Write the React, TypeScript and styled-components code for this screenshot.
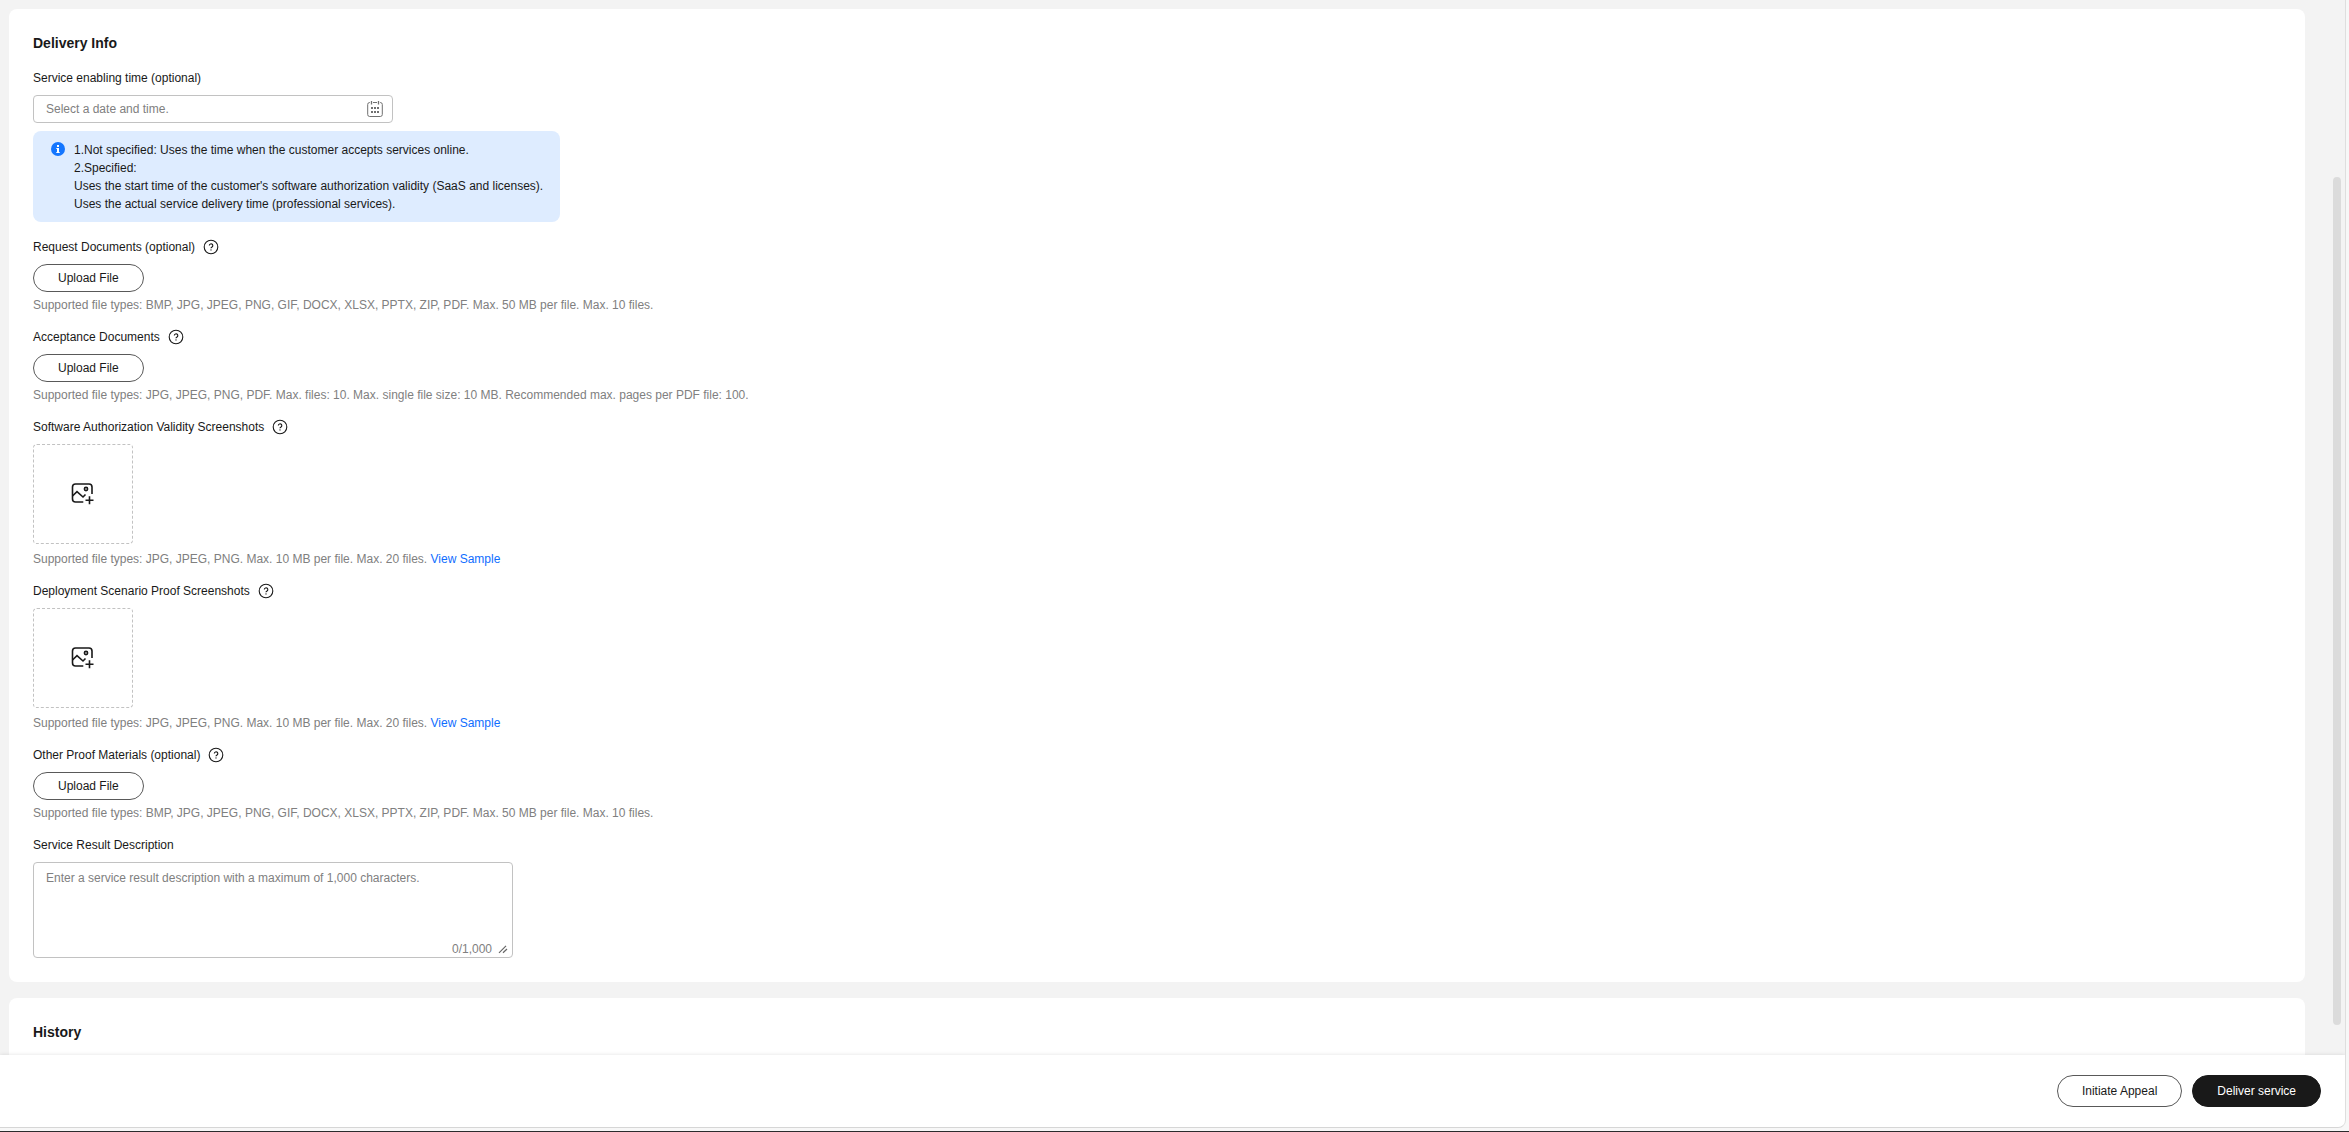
import React, { useState } from "react";
import styled, { createGlobalStyle } from "styled-components";

const GlobalStyle = createGlobalStyle`
  *, *::before, *::after { box-sizing: border-box; }
  body {
    margin: 0;
    background: #f7f7f7;
    color: #191919;
    font-family: "Liberation Sans", Arial, sans-serif;
    font-size: 12px;
    line-height: 18px;
  }
  button, input, textarea { font: inherit; color: inherit; }
`;

const Window = styled.div`
  display: flex;
  flex-direction: column;
  height: 100vh;
  padding: 0 3px 3px 0;
  border-bottom: 1px solid #2b2b2d;
`;

const Frame = styled.div`
  display: flex;
  flex-direction: column;
  flex: 1;
  min-height: 0;
  overflow: hidden;
  background: #f3f3f3;
  border-right: 1px solid #dedede;
  border-bottom: 1px solid #d6d6d6;
  border-bottom-right-radius: 8px;
`;

const Viewport = styled.div`
  display: flex;
  flex: 1;
  min-height: 0;
`;

const Content = styled.main`
  display: flex;
  flex-direction: column;
  gap: 16px;
  flex: 1;
  min-width: 0;
  overflow: hidden;
  padding: 9px 28px 0 9px;
`;

const ScrollRail = styled.div`
  display: flex;
  width: 12px;
  padding: 177px 4px 30px 0;
`;

const ScrollThumb = styled.div`
  flex: 1;
  border-radius: 4px;
  background: #dbdbdb;
`;

const Card = styled.section`
  flex: none;
  padding: 24px;
  border-radius: 8px;
  background: #fff;
`;

const CardTitle = styled.h2`
  margin: 0;
  font-size: 14px;
  line-height: 20px;
  font-weight: 700;
`;

const Form = styled.form`
  display: flex;
  flex-direction: column;
  gap: 16px;
  margin-top: 16px;
`;

const Field = styled.div`
  display: flex;
  flex-direction: column;
  align-items: flex-start;
  gap: 8px;
`;

const LabelRow = styled.div`
  display: flex;
  align-items: center;
  gap: 8px;
  height: 18px;
`;

const HelpButton = styled.button`
  display: flex;
  padding: 0;
  border: 0;
  background: none;
`;

const DateBox = styled.div`
  display: flex;
  align-items: center;
  width: 360px;
  max-width: 100%;
  height: 28px;
  padding: 0 9px 0 12px;
  border: 1px solid #c2c2c2;
  border-radius: 4px;
`;

const DateInput = styled.input`
  flex: 1;
  min-width: 0;
  padding: 0;
  border: 0;
  outline: 0;
  background: none;
  &::placeholder { color: #808080; opacity: 1; }
`;

const Notice = styled.div`
  display: flex;
  gap: 8px;
  padding: 10px 17px 9px 17px;
  border-radius: 8px;
  background: #deecff;
`;

const NoticeText = styled.p`
  margin: 0;
`;

const Upload = styled.div<{ $gap: number }>`
  display: flex;
  flex-direction: column;
  align-items: flex-start;
  gap: ${(p) => p.$gap}px;
`;

const Pill = styled.button<{ $primary?: boolean; $large?: boolean }>`
  height: ${(p) => (p.$large ? 32 : 28)}px;
  padding: 0 24px;
  border: 1px solid ${(p) => (p.$primary ? "#191919" : "#595959")};
  border-radius: 16px;
  background: ${(p) => (p.$primary ? "#191919" : "#fff")};
  color: ${(p) => (p.$primary ? "#fff" : "#191919")};
`;

const ImageDrop = styled.button`
  display: flex;
  align-items: center;
  justify-content: center;
  width: 100px;
  height: 100px;
  padding: 0;
  border: 1px dashed #c2c2c2;
  border-radius: 4px;
  background: #fff;
`;

const Hint = styled.p`
  margin: 0;
  line-height: 14px;
  color: #808080;
`;

const Link = styled.a`
  color: #0f6eff;
  text-decoration: none;
`;

const TextBox = styled.div`
  display: flex;
  flex-direction: column;
  width: 480px;
  max-width: 100%;
  height: 96px;
  padding: 6px 4px 0 12px;
  border: 1px solid #c2c2c2;
  border-radius: 4px;
`;

const TextArea = styled.textarea`
  flex: 1;
  padding: 0;
  border: 0;
  outline: 0;
  resize: none;
  background: none;
  &::placeholder { color: #808080; opacity: 1; }
`;

const Counter = styled.div`
  display: flex;
  align-items: center;
  justify-content: flex-end;
  gap: 6px;
  line-height: 16px;
  color: #808080;
`;

const Footer = styled.footer`
  display: flex;
  align-items: center;
  justify-content: flex-end;
  gap: 10px;
  position: relative;
  height: 72px;
  padding: 0 24px;
  background: #fff;
  box-shadow: 0 0 4px rgba(0, 0, 0, 0.12);
`;

const HelpIcon = () => (
  <svg width="16" height="16" viewBox="0 0 16 16" fill="none" stroke="#191919">
    <circle cx="8" cy="8" r="6.8" strokeWidth="1.1" />
    <path d="M6.3 6.6a1.75 1.75 0 1 1 2.7 1.5c-.7.4-1 .6-1 1.2" strokeWidth="1.1" />
    <circle cx="8" cy="10.9" r=".7" fill="#191919" stroke="none" />
  </svg>
);

const CalendarIcon = () => (
  <svg width="16" height="16" viewBox="0 0 16 16" fill="none" stroke="#707070">
    <path d="M3 1.5h-.3A2 2 0 0 0 .7 3.500v10a2 2 0 0 0 2 2h10.600a2 2 0 0 0 2-2v-10a2 2 0 0 0-2-2H13M6 1.500h4" />
    <path d="M4.500 0v3.500M11.500 0v3.500" strokeWidth="1.300" />
    <path d="M4 7h2M7 7h2M10 7h2M4 11h2M7 11h2M10 11h2" strokeWidth="2" />
  </svg>
);

const InfoIcon = () => (
  <svg width="16" height="18" viewBox="0 0 16 18">
    <circle cx="8" cy="8" r="7" fill="#1476ff" />
    <path d="M7 4h2v2H7zM6.3 7H9v4h.7v1H6.3v-1H7V8h-.7z" fill="#fff" />
  </svg>
);

const ImageAddIcon = () => (
  <svg width="24" height="24" viewBox="0 0 24 24" fill="none" stroke="#191919" strokeWidth="1.6">
    <path d="M21 12V5a3 3 0 0 0-3-3H4.500a3 3 0 0 0-3 3v12a3 3 0 0 0 3 3H12.300" />
    <path d="M1.500 14l4.500-4.300L12 15l2.500-2.500" />
    <circle cx="15" cy="7" r="1.600" />
    <path d="M18.500 14.200v8M14.500 18.200h8" />
  </svg>
);

const ResizeIcon = () => (
  <svg width="10" height="10" viewBox="0 0 10 10" stroke="#666" strokeWidth="1.2">
    <path d="M1 8.800L8 1.800M5 8.800L9 5" />
  </svg>
);

const DOC_HINT =
  "Supported file types: BMP, JPG, JPEG, PNG, GIF, DOCX, XLSX, PPTX, ZIP, PDF. Max. 50 MB per file. Max. 10 files.";
const IMAGE_HINT = "Supported file types: JPG, JPEG, PNG. Max. 10 MB per file. Max. 20 files.";

type UploadProps = { id: string; label: string; hint: string; image?: boolean };

const uploads: UploadProps[] = [
  { id: "request", label: "Request Documents (optional)", hint: DOC_HINT },
  {
    id: "acceptance",
    label: "Acceptance Documents",
    hint: "Supported file types: JPG, JPEG, PNG, PDF. Max. files: 10. Max. single file size: 10 MB. Recommended max. pages per PDF file: 100.",
  },
  { id: "validity", label: "Software Authorization Validity Screenshots", hint: IMAGE_HINT, image: true },
  { id: "scenario", label: "Deployment Scenario Proof Screenshots", hint: IMAGE_HINT, image: true },
  { id: "other", label: "Other Proof Materials (optional)", hint: DOC_HINT },
];

const UploadField = ({ id, label, hint, image }: UploadProps) => (
  <Field>
    <LabelRow>
      <label htmlFor={id}>{label}</label>
      <HelpButton type="button" aria-label={"About " + label}>
        <HelpIcon />
      </HelpButton>
    </LabelRow>
    <Upload $gap={image ? 8 : 6}>
      {image ? (
        <ImageDrop id={id} type="button">
          <ImageAddIcon />
        </ImageDrop>
      ) : (
        <Pill id={id} type="button">Upload File</Pill>
      )}
      <Hint>
        {hint}
        {image && <> <Link href="#sample">View Sample</Link></>}
      </Hint>
    </Upload>
  </Field>
);

export default function App() {
  const [description, setDescription] = useState("");
  return (
    <Window>
      <GlobalStyle />
      <Frame>
        <Viewport>
          <Content>
            <Card>
              <CardTitle>Delivery Info</CardTitle>
              <Form>
                <Field>
                  <LabelRow>
                    <label htmlFor="time">Service enabling time (optional)</label>
                  </LabelRow>
                  <DateBox>
                    <DateInput id="time" placeholder="Select a date and time." />
                    <CalendarIcon />
                  </DateBox>
                  <Notice>
                    <InfoIcon />
                    <NoticeText>
                      1.Not specified: Uses the time when the customer accepts services online.
                      <br />
                      2.Specified:
                      <br />
                      Uses the start time of the customer's software authorization validity (SaaS and licenses).
                      <br />
                      Uses the actual service delivery time (professional services).
                    </NoticeText>
                  </Notice>
                </Field>
                {uploads.map((u) => (
                  <UploadField key={u.id} {...u} />
                ))}
                <Field>
                  <LabelRow>
                    <label htmlFor="description">Service Result Description</label>
                  </LabelRow>
                  <TextBox>
                    <TextArea
                      id="description"
                      maxLength={1000}
                      value={description}
                      onChange={(e) => setDescription(e.target.value)}
                      placeholder="Enter a service result description with a maximum of 1,000 characters."
                    />
                    <Counter>
                      <span>{description.length}/1,000</span>
                      <ResizeIcon />
                    </Counter>
                  </TextBox>
                </Field>
              </Form>
            </Card>
            <Card>
              <CardTitle>History</CardTitle>
            </Card>
          </Content>
          <ScrollRail>
            <ScrollThumb />
          </ScrollRail>
        </Viewport>
        <Footer>
          <Pill type="button" $large>Initiate Appeal</Pill>
          <Pill type="button" $large $primary>Deliver service</Pill>
        </Footer>
      </Frame>
    </Window>
  );
}
